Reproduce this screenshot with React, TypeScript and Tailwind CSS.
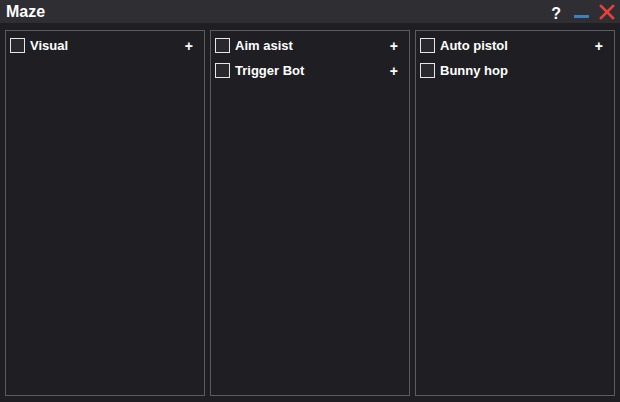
import React from "react";

type Item = { label: string; plus: boolean };
const cols: Item[][] = [
  [{ label: "Visual", plus: true }],
  [
    { label: "Aim asist", plus: true },
    { label: "Trigger Bot", plus: true },
  ],
  [
    { label: "Auto pistol", plus: true },
    { label: "Bunny hop", plus: false },
  ],
];

function Row({ label, plus }: Item) {
  return (
    <div className="flex h-[25px] items-center pl-[4px] pr-[11px]">
      <div className="h-[15px] w-[15px] border border-[#e6e6e6] bg-[#2a2a2e]" />
      <span className="ml-[5px] text-[13px] font-bold text-white">{label}</span>
      {plus && <span className="ml-auto text-[14px] font-bold leading-none text-white">+</span>}
    </div>
  );
}

export default function App() {
  return (
    <div
      className="flex h-[402px] w-[620px] flex-col bg-[#1f1f23]"
      style={{ fontFamily: '"Liberation Sans", Arial, sans-serif' }}
    >
      <div className="flex h-[23px] items-center bg-[#2e2e33] pl-[6px] pr-[5px]">
        <span className="text-[16px] font-bold leading-none text-white">Maze</span>
        <div className="ml-auto flex items-center">
          <span className="mt-[4px] text-[16px] font-bold leading-none text-white">?</span>
          <div className="ml-[13px] mt-[10px] h-[3px] w-[15px] bg-[#3f7fc0]" />
          <svg className="ml-[10px]" width="16" height="16" viewBox="0 0 16 16">
            <path d="M2 2 L14 14 M14 2 L2 14" stroke="#e8413a" strokeWidth="2.6" strokeLinecap="square" />
          </svg>
        </div>
      </div>
      <div className="flex flex-1 gap-[5px] px-[5px] pb-[6px] pt-[7px]">
        {cols.map((c, i) => (
          <div key={i} className="flex-1 border border-[#5c5c60] pt-[2px]">
            {c.map((it) => (
              <Row key={it.label} {...it} />
            ))}
          </div>
        ))}
      </div>
    </div>
  );
}
